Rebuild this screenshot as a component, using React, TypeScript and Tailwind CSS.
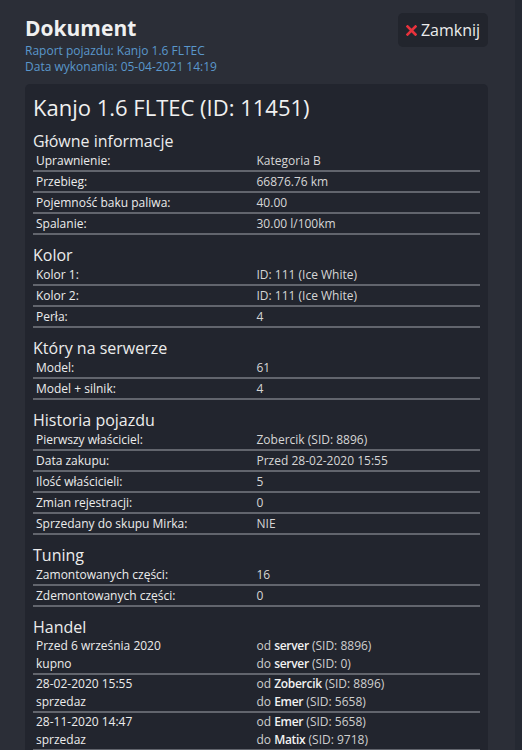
import React from "react";

type Row = [string, string];

const sections: { title: string; rows: Row[] }[] = [
  {
    title: "Główne informacje",
    rows: [
      ["Uprawnienie:", "Kategoria B"],
      ["Przebieg:", "66876.76 km"],
      ["Pojemność baku paliwa:", "40.00"],
      ["Spalanie:", "30.00 l/100km"],
    ],
  },
  {
    title: "Kolor",
    rows: [
      ["Kolor 1:", "ID: 111 (Ice White)"],
      ["Kolor 2:", "ID: 111 (Ice White)"],
      ["Perła:", "4"],
    ],
  },
  {
    title: "Który na serwerze",
    rows: [
      ["Model:", "61"],
      ["Model + silnik:", "4"],
    ],
  },
  {
    title: "Historia pojazdu",
    rows: [
      ["Pierwszy właściciel:", "Zobercik (SID: 8896)"],
      ["Data zakupu:", "Przed 28-02-2020 15:55"],
      ["Ilość właścicieli:", "5"],
      ["Zmian rejestracji:", "0"],
      ["Sprzedany do skupu Mirka:", "NIE"],
    ],
  },
  {
    title: "Tuning",
    rows: [
      ["Zamontowanych części:", "16"],
      ["Zdemontowanych części:", "0"],
    ],
  },
];

const trades = [
  { date: "Przed 6 września 2020", type: "kupno", from: ["server", "8896"], to: ["server", "0"] },
  { date: "28-02-2020 15:55", type: "sprzedaz", from: ["Zobercik", "8896"], to: ["Emer", "5658"] },
  { date: "28-11-2020 14:47", type: "sprzedaz", from: ["Emer", "5658"], to: ["Matix", "9718"] },
];

function Party({ dir, who }: { dir: string; who: string[] }) {
  return (
    <div>
      {dir} <span className="font-semibold text-[#f2f2f2] tracking-[-0.3px]">{who[0]}</span> (SID: {who[1]})
    </div>
  );
}

export default function App() {
  return (
    <div className="flex min-h-[750px] bg-[#2b2e37] font-['Open_Sans',sans-serif] text-[#e6e6e6]">
      <div className="flex-1 pl-[25px] pr-[27px] pt-[13px]">
        {/* Header */}
        <div className="flex items-start justify-between">
          <div className="pt-[3px]">
            <h1 className="text-[21px] leading-[24px] font-bold text-[#f0f0f0]">Dokument</h1>
            <p className="mt-[3px] text-[12px] leading-[16px] text-[#5a97cb]">Raport pojazdu: Kanjo 1.6 FLTEC</p>
            <p className="text-[12px] leading-[16px] text-[#5a97cb]">Data wykonania: 05-04-2021 14:19</p>
          </div>
          <button className="flex h-[34px] w-[90px] items-center justify-center gap-[4px] rounded-[5px] bg-[#22252d] text-[16px] text-[#ececec]">
            <svg width="11" height="11" viewBox="0 0 11 11" className="shrink-0">
              <path d="M1.5 1.5 L9.5 9.5 M9.5 1.5 L1.5 9.5" stroke="#e8323c" strokeWidth="2.6" strokeLinecap="square" />
            </svg>
            Zamknij
          </button>
        </div>

        {/* Card */}
        <div className="mt-[9px] rounded-[5px] bg-[#22252e] px-[8px] pt-[8px] pb-[8px]">
          <h2 className="text-[22px] leading-[31px] text-[#f0f0f0]">Kanjo 1.6 FLTEC (ID: 11451)</h2>

          {sections.map((s, i) => (
            <div key={s.title}>
              <h3 className={(i === 0 ? "pt-[8px]" : "pt-[10px]") + " text-[16px] leading-[20px] text-[#ececec]"}>{s.title}</h3>
              {s.rows.map(([k, v]) => (
                <div key={k} className="grid grid-cols-2 border-b-2 border-[#62656d] text-[12px] leading-[19px]">
                  <div className="pl-[3px] text-[#ececec]">{k}</div>
                  <div className="text-[#d6d6d6]">{v}</div>
                </div>
              ))}
            </div>
          ))}

          <h3 className="pt-[10px] text-[16px] leading-[20px] text-[#ececec]">Handel</h3>
          {trades.map((t) => (
            <div key={t.date} className="grid grid-cols-2 border-b-2 border-[#62656d] text-[12px] leading-[18px]">
              <div className="pl-[3px] text-[#ececec]">
                <div>{t.date}</div>
                <div>{t.type}</div>
              </div>
              <div className="text-[#cfcfcf]">
                <Party dir="od" who={t.from} />
                <Party dir="do" who={t.to} />
              </div>
            </div>
          ))}
        </div>
      </div>
      <div className="w-[7px] bg-[#252932]" />
    </div>
  );
}
